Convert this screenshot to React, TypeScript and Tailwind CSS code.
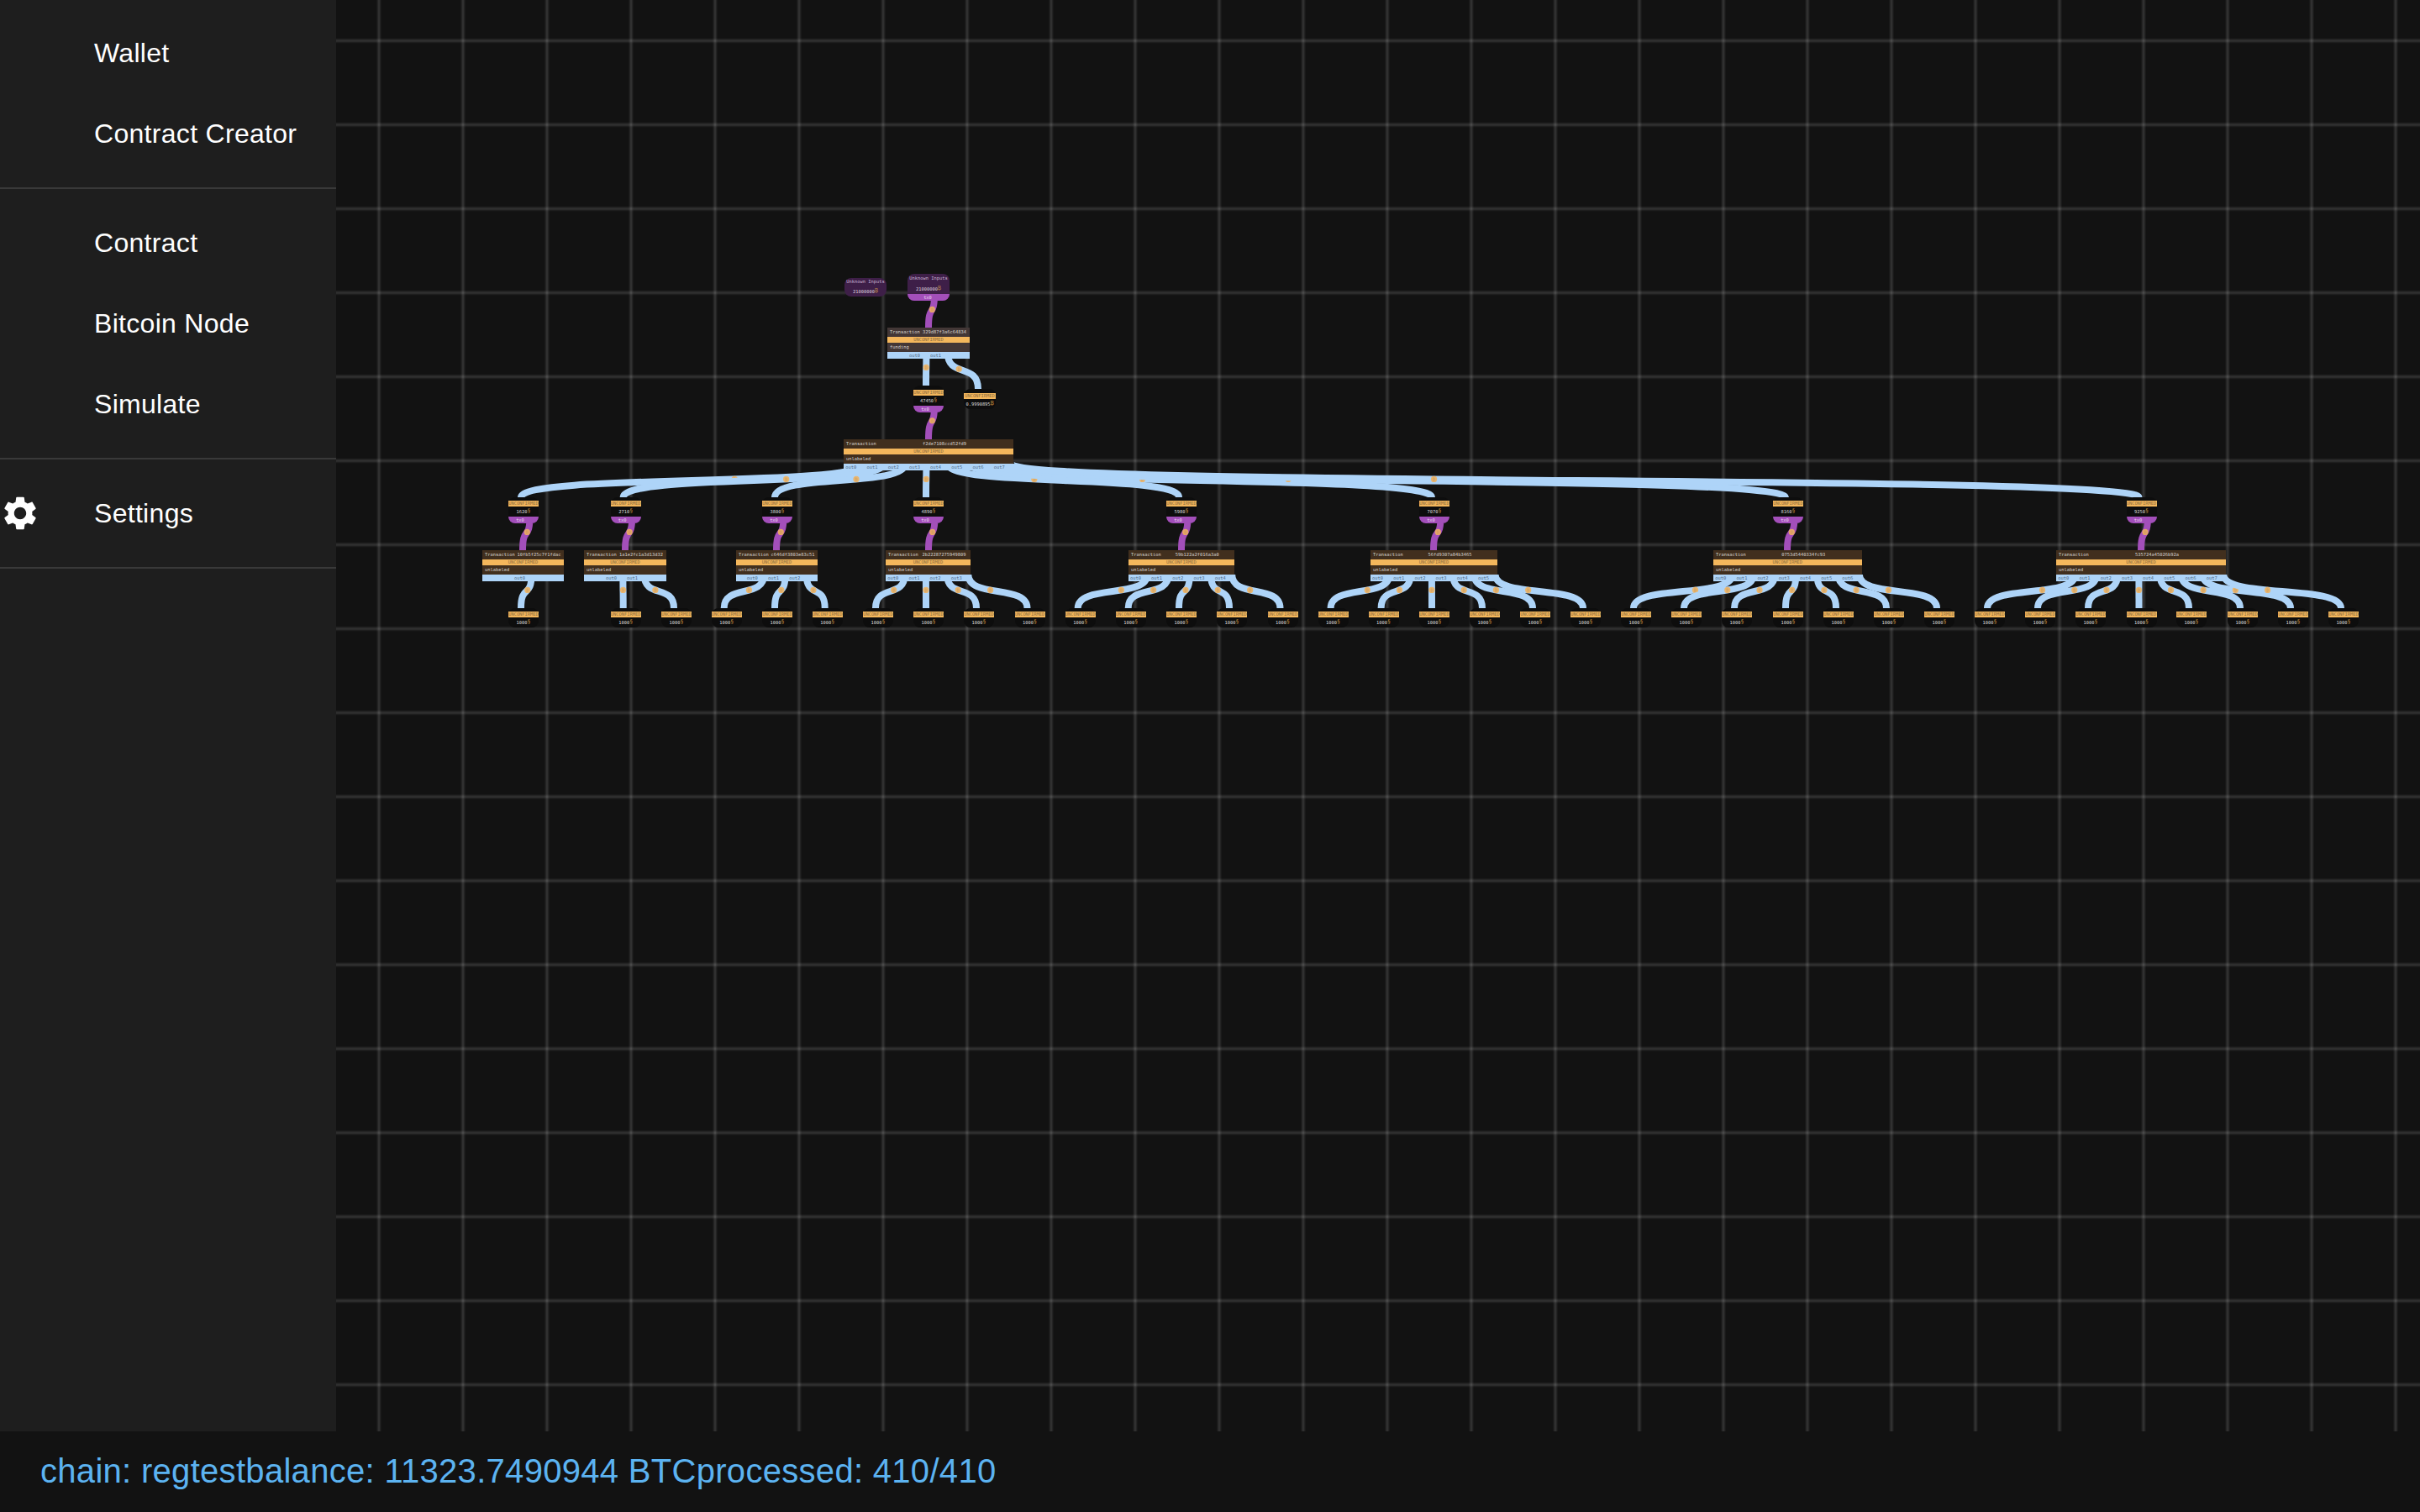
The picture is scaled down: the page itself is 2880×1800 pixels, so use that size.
import React from "react";

const MONO = "font-['DejaVu_Sans_Mono','Liberation_Mono',monospace]";

type Tx = { left: number; w: number; hash: string; into: number; n: number; wire: number; value: string; leaves: number[] };

const TOP = 655;
const txs: Tx[] = [
  { left: 574, w: 97, hash: "10fb5f25c7f1fdac", into: 622, n: 1, wire: 620, value: "1620", leaves: [620] },
  { left: 695, w: 98, hash: "1a1e2fc1a3d13d32", into: 744, n: 2, wire: 741.7, value: "2710", leaves: [741.7, 802] },
  { left: 876, w: 97, hash: "c646df3803e83c51", into: 924, n: 3, wire: 922, value: "3800", leaves: [861.7, 922, 981.7] },
  { left: 1054, w: 101, hash: "2b22287275949809", into: 1105, n: 4, wire: 1102, value: "4890", leaves: [1042, 1102, 1162, 1222.5] },
  { left: 1343, w: 125.6, hash: "59b122a2f016a3a0", into: 1406, n: 5, wire: 1403, value: "5980", leaves: [1282.7, 1342.7, 1403, 1463, 1523.5] },
  { left: 1631, w: 151, hash: "56fd9307a84b3465", into: 1706, n: 6, wire: 1704, value: "7070", leaves: [1583.6, 1643.6, 1704, 1764, 1824, 1884] },
  { left: 2039, w: 176.5, hash: "0753d5440334fc93", into: 2127, n: 7, wire: 2125, value: "8160", leaves: [1944, 2004, 2064, 2125, 2185, 2245, 2305] },
  { left: 2447, w: 202, hash: "535724a45026b92a", into: 2548, n: 8, wire: 2545.5, value: "9250", leaves: [2365, 2425, 2485, 2545.5, 2605, 2666, 2726, 2786] },
];

const MAIN = { left: 1004, w: 202, n: 8 };
const FUND = { left: 1056, w: 98, n: 2 };

const outX = (t: { left: number; w: number; n: number }, i: number) =>
  t.left + t.w / 2 - 4 + (i - (t.n - 1) / 2) * 25.2 + 14;

const BLUE = "#aed4f8";
const PURPLE = "#a34fba";

function Wire({ s, y0, e, y1, color }: { s: number; y0: number; e: number; y1: number; color: string }) {
  const h = y1 - y0;
  const k = h * 0.72;
  const bx = s + (e - s) * 0.375;
  const by = y0 + h * 0.46;
  return (
    <g>
      <path d={`M${s} ${y0} C${s} ${y0 + k} ${e} ${y1 - k} ${e} ${y1}`} fill="none" stroke={color} strokeWidth={8} />
      <circle cx={bx} cy={by} r={3.6} fill="#f0b25e" fillOpacity={0.88} />
      <text x={bx} y={by + 1.8} fontSize={5} textAnchor="middle" fill="#c99a55" fontFamily="DejaVu Sans">₿</text>
    </g>
  );
}

function GridLine({ x1, x2, y1, y2 }: { x1: number; x2: number; y1: number; y2: number }) {
  return (
    <g stroke="#ffffff">
      <line x1={x1} x2={x2} y1={y1} y2={y2} strokeOpacity={0.03} strokeWidth={6} />
      <line x1={x1} x2={x2} y1={y1} y2={y2} strokeOpacity={0.05} strokeWidth={4} />
      <line x1={x1} x2={x2} y1={y1} y2={y2} strokeOpacity={0.06} strokeWidth={2} />
    </g>
  );
}

function Grid() {
  const xs = Array.from({ length: 25 }, (_, i) => 451 + i * 100);
  const ys = Array.from({ length: 17 }, (_, i) => 48.5 + i * 100);
  return (
    <g>
      {xs.map((x) => (
        <GridLine key={x} x1={x} x2={x} y1={0} y2={1704} />
      ))}
      {ys.map((y) => (
        <GridLine key={y} x1={400} x2={2880} y1={y} y2={y} />
      ))}
    </g>
  );
}

function Chip({ w = 36 }: { w?: number }) {
  return (
    <div
      className="h-[7px] bg-[#f4b75c] text-center text-[5.4px] leading-[7px] text-[#8a6a3c]"
      style={{ width: w }}
    >
      UNCONFIRMED
    </div>
  );
}

function Value({ v, unit = "§" }: { v: string; unit?: string }) {
  return (
    <div className="flex h-[12px] items-center justify-center text-[5.4px] text-[#dcdcdc]">
      {v}
      <span className="text-[6.6px] text-[#c08a3c]">{unit}</span>
    </div>
  );
}

function Utxo({ wire, value, spend }: { wire: number; value: string; spend: boolean }) {
  const top = spend ? 592 : 724;
  return (
    <div
      className="absolute flex w-[36px] flex-col rounded-[8px] bg-[#0d0d0d] pt-[4px]"
      style={{ left: wire - 15, top }}
    >
      <Chip />
      <Value v={value} />
      {spend ? (
        <div className="h-[8px] rounded-b-[8px] bg-[#a34fba] pr-[8px] text-center text-[5.4px] leading-[8px] text-[#ead6ef]">
          tx0
        </div>
      ) : null}
    </div>
  );
}

function TxNode({ left, top, w, hash, n, label, funding }: { left: number; top: number; w: number; hash: string; n: number; label: string; funding?: boolean }) {
  const row = funding ? "bg-[#433736]" : "bg-[#412f1e]";
  return (
    <div className="absolute flex flex-col" style={{ left, top, width: w }}>
      <div className={`flex h-[11px] items-center justify-between px-[3px] text-[5.4px] text-[#d8d4d0] ${row}`}>
        <span className="w-[38px]">Transaction</span>
        <span className="w-[52px]">{hash}</span>
        <span className="w-0" />
      </div>
      <div className="h-[7px] bg-[#f4b75c] text-center text-[5.4px] leading-[7px] text-[#8a6a3c]">UNCONFIRMED</div>
      <div className={`flex h-[11px] items-center px-[3px] text-[5.4px] text-[#d8d4d0] ${row}`}>{label}</div>
      <div className="flex h-[8px] justify-center bg-[#aed4f8] pr-[8px] text-[5.4px] leading-[8px] text-[#4f6a86]">
        {Array.from({ length: n }, (_, i) => (
          <span key={i} className="w-[25.2px] shrink-0 text-center">
            out{i}
          </span>
        ))}
      </div>
    </div>
  );
}

function Unknown({ left, top, withTx }: { left: number; top: number; withTx: boolean }) {
  return (
    <div
      className="absolute flex w-[50px] flex-col rounded-[8px] bg-[#3e1f48] text-[5.4px] text-[#cbb3d3]"
      style={{ left, top }}
    >
      <div className={`flex items-center justify-center ${withTx ? "h-[10px]" : "h-[8px]"}`}>Unknown Inputs</div>
      <div className="mt-[2px] flex h-[12px] items-center justify-center text-[#dcd0df]">
        21000000<span className="text-[6.6px] text-[#b5824c]">₿</span>
      </div>
      {withTx ? (
        <div className="h-[8px] rounded-b-[8px] bg-[#a34fba] pr-[2px] text-center leading-[8px] text-[#ead6ef]">tx0</div>
      ) : null}
    </div>
  );
}

function Canvas() {
  return (
    <div className={`absolute top-0 left-[-400px] h-[1704px] w-[2880px] ${MONO}`}>
      <svg className="absolute inset-0" width={2880} height={1704}>
        <Grid />
        <Wire s={1112} y0={350} e={1105} y1={390} color={PURPLE} />
        <Wire s={outX(FUND, 0)} y0={419} e={1102} y1={459} color={BLUE} />
        <Wire s={outX(FUND, 1)} y0={419} e={1164} y1={463} color={BLUE} />
        <Wire s={1112} y0={482} e={1105} y1={523} color={PURPLE} />
        {txs.map((t, i) => (
          <Wire key={i} s={outX(MAIN, i)} y0={552} e={t.wire} y1={592} color={BLUE} />
        ))}
        {txs.map((t, i) => (
          <Wire key={i} s={t.wire + 10.5} y0={615} e={t.into} y1={TOP} color={PURPLE} />
        ))}
        {txs.map((t) =>
          t.leaves.map((l, j) => <Wire key={t.hash + j} s={outX(t, j)} y0={684} e={l} y1={724} color={BLUE} />)
        )}
      </svg>

      <Unknown left={1005} top={331} withTx={false} />
      <Unknown left={1080} top={326} withTx />
      <TxNode left={FUND.left} top={390} w={FUND.w} n={FUND.n} hash="329d87f3a6c64834" label="funding" funding />
      <div className="absolute flex w-[36px] flex-col rounded-[8px] bg-[#0d0d0d] pt-[5px]" style={{ left: 1087, top: 459 }}>
        <Chip />
        <Value v="47450" />
        <div className="h-[8px] rounded-b-[8px] bg-[#a34fba] pr-[8px] text-center text-[5.4px] leading-[8px] text-[#ead6ef]">tx0</div>
      </div>
      <div className="absolute flex w-[38px] flex-col rounded-[8px] bg-[#0d0d0d] pt-[5px]" style={{ left: 1147, top: 463 }}>
        <Chip w={38} />
        <Value v="0.9990895" unit="₿" />
      </div>
      <TxNode left={MAIN.left} top={523} w={MAIN.w} n={MAIN.n} hash="f2de7108ccd52fd9" label="unlabeled" />
      {txs.map((t) => (
        <React.Fragment key={t.hash}>
          <Utxo wire={t.wire} value={t.value} spend />
          <TxNode left={t.left} top={TOP} w={t.w} n={t.n} hash={t.hash} label="unlabeled" />
          {t.leaves.map((l) => (
            <Utxo key={l} wire={l} value="1000" spend={false} />
          ))}
        </React.Fragment>
      ))}
    </div>
  );
}

function Item({ label, icon }: { label: string; icon?: boolean }) {
  return (
    <li className="flex h-[96px] items-center">
      <span className="flex w-[112px] shrink-0">
        {icon ? (
          <svg width={48} height={48} viewBox="0 0 24 24" fill="#ffffff">
            <path d="M19.14 12.94c.04-.3.06-.61.06-.94 0-.32-.02-.64-.07-.94l2.03-1.58c.18-.14.23-.41.12-.61l-1.92-3.32c-.12-.22-.37-.29-.59-.22l-2.39.96c-.5-.38-1.03-.7-1.62-.94l-.36-2.54c-.04-.24-.24-.41-.48-.41h-3.84c-.24 0-.43.17-.47.41l-.36 2.54c-.59.24-1.13.57-1.62.94l-2.39-.96c-.22-.08-.47 0-.59.22L2.74 8.87c-.12.21-.08.47.12.61l2.03 1.58c-.05.3-.09.63-.09.94s.02.64.07.94l-2.03 1.58c-.18.14-.23.41-.12.61l1.92 3.32c.12.22.37.29.59.22l2.39-.96c.5.38 1.03.7 1.62.94l.36 2.54c.05.24.24.41.48.41h3.84c.24 0 .44-.17.47-.41l.36-2.54c.59-.24 1.13-.56 1.62-.94l2.39.96c.22.08.47 0 .59-.22l1.92-3.32c.12-.22.07-.47-.12-.61l-2.01-1.58zM12 15.6c-1.98 0-3.6-1.62-3.6-3.6s1.62-3.6 3.6-3.6 3.6 1.62 3.6 3.6-1.62 3.6-3.6 3.6z" />
          </svg>
        ) : null}
      </span>
      <span className="text-[32px] tracking-[0.3px] text-white">{label}</span>
    </li>
  );
}

export default function App() {
  return (
    <div className="flex h-[1800px] w-[2880px] flex-col overflow-hidden bg-[#121212] font-['Liberation_Sans',Arial,sans-serif]">
      <div className="flex min-h-0 flex-1">
        <aside className="flex w-[400px] shrink-0 flex-col bg-[#1e1e1e]">
          <ul className="pt-[15px] pb-[16px]">
            <Item label="Wallet" />
            <Item label="Contract Creator" />
          </ul>
          <hr className="h-[2px] border-0 bg-[#393939]" />
          <ul className="py-[16px]">
            <Item label="Contract" />
            <Item label="Bitcoin Node" />
            <Item label="Simulate" />
          </ul>
          <hr className="h-[2px] border-0 bg-[#393939]" />
          <ul className="py-[16px]">
            <Item label="Settings" icon />
          </ul>
          <hr className="h-[2px] border-0 bg-[#393939]" />
        </aside>
        <main className="relative flex-1 overflow-hidden bg-[#121212]">
          <Canvas />
        </main>
      </div>
      <footer className="flex h-[96px] shrink-0 items-center bg-[#121212] pb-[2px] pl-[48px] text-[40px] tracking-[0.3px] text-[#5cb3f1]">
        <span>chain: regtest</span>
        <span>balance: 11323.7490944 BTC</span>
        <span>processed: 410/410</span>
      </footer>
    </div>
  );
}
